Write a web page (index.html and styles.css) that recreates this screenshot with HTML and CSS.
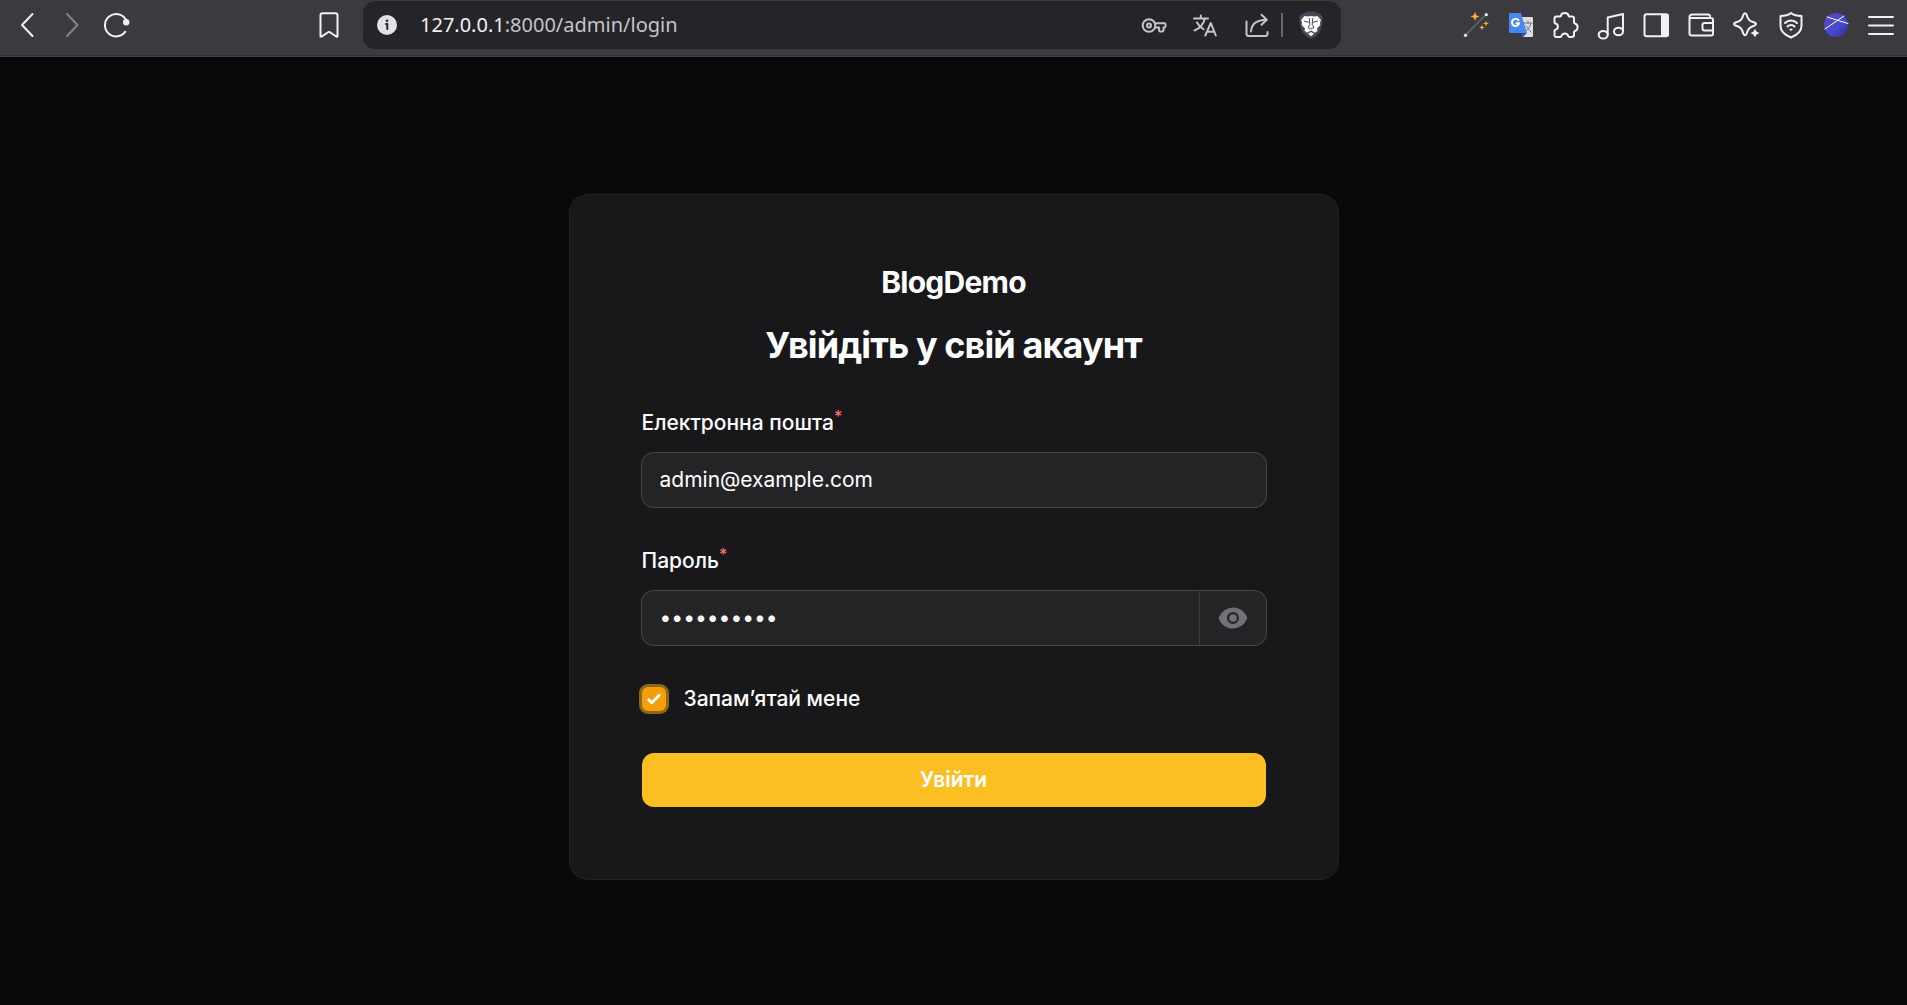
FILE: index.html
```html
<!DOCTYPE html>
<html lang="uk">
<head>
<meta charset="utf-8">
<meta name="viewport" content="width=device-width, initial-scale=1">
<title>Увійдіть у свій акаунт - BlogDemo</title>
<link rel="stylesheet" href="styles.css">
</head>
<body>
<header class="toolbar">
  <div class="toolbar-start">
    <div class="icon-group">
      <button class="icon-button" type="button" aria-label="Назад"><svg class="icon" viewBox="0 0 32 32"><path d="M21.500 5 11 16l10.500 11"/></svg></button>
      <button class="icon-button muted" type="button" aria-label="Вперед"><svg class="icon" viewBox="0 0 32 32"><path d="M11 5l10.500 11L11 27"/></svg></button>
      <button class="icon-button" type="button" aria-label="Оновити"><svg class="icon" viewBox="0 0 32 32"><path d="M24.800 10.500A11.200 11.200 0 1 0 24.300 22.700"/><circle class="solid" cx="25.200" cy="13.300" r="3.200"/></svg></button>
    </div>
    <button class="icon-button" type="button" aria-label="Закладка"><svg class="icon" viewBox="0 0 32 32"><path d="M9.500 4.300h13a2 2 0 0 1 2 2V27.500l-1 .2L16.500 23h-1l-7 4.700-1-.2V6.300a2 2 0 0 1 2-2z"/></svg></button>
  </div>
  <div class="address-bar">
    <button class="site-info" type="button" aria-label="Відомості про сайт"><svg class="icon" viewBox="0 0 32 32"><circle class="solid" cx="16" cy="16" r="10"/><path class="info-mark" d="M15 15h1.300v5"/><circle class="info-dot" cx="16" cy="11.800" r="1.300"/></svg></button>
    <p class="url"><span class="url-host">127.0.0.1</span>:8000/admin/login</p>
    <div class="address-actions">
      <button class="address-button" type="button" aria-label="Паролі"><svg class="icon" viewBox="0 0 32 32"><circle cx="11" cy="16.500" r="6.300"/><circle cx="11" cy="16.500" r="2"/><path d="M17 14.300h9.500q1 0 1 1v2q0 1.200-1.200 1.200h-.8v2.700q0 1.200-1.200 1.200h-2q-1.200 0-1.200-1.200v-2.700H17"/></svg></button>
      <button class="address-button" type="button" aria-label="Перекласти"><svg class="icon" viewBox="0 0 32 32"><path d="M5 9.500h14M11.800 6.500v3M16 9.500C14.500 15 10.500 19.500 5.500 21.500M8 13.500c1.500 3 3.500 5 6.500 6.700M16.300 26.500 21.800 14l5 12.500M18 22.700h7.300"/></svg></button>
      <button class="address-button" type="button" aria-label="Поділитися"><svg class="icon" viewBox="0 0 32 32"><path d="M6.500 12.500V25q0 2 2 2h17q2 0 2-2v-2M11 22.500C11.500 15 16 11 26.500 10.800M21.500 5.800l5.300 5-5.300 5"/></svg></button>
      <button class="shield-button" type="button" aria-label="Захист"><svg class="icon" viewBox="0 0 32 32"><path class="lion-mane" d="m9 4.500 3-2h8l3 2h2l3 4-1 2 .5 3L25 23l-4 4-5 3-5-3-4-4L4.500 13.500l.5-3-1-2 3-4z"/><path class="lion-face" d="m9.500 7 3.500.6L16 7l3 .6 3.500-.6L26 11l-1 2.500.3 2.500-3.300 3.500.5 2.300-2.500 2L16 21.500l-4 2.300-2.500-2 .5-2.300L6.700 16l.3-2.500L6 11zM16 23l3 1.800-3 2.400-3-2.400z"/><path class="lion-lines" d="m9.500 12.200 4 1M22.500 12.200l-4 1M14.300 9.500l.5 6-1.800 3 3 1.500 3-1.500-1.800-3 .5-6"/></svg></button>
    </div>
  </div>
  <div class="toolbar-end">
    <button class="icon-button" type="button" aria-label="Чарівна паличка"><svg class="icon" viewBox="0 0 32 32"><path class="wand" d="M5.500 26 26 5.500"/><circle class="solid" cx="5.500" cy="26.300" r="1.600"/><circle class="solid" cx="26.300" cy="5.700" r="1.600"/><path class="stars" d="m15 3 1.300 3.200 3.200 1.300-3.200 1.300L15 12l-1.300-3.200-3.200-1.300 3.200-1.300zM26 11.500l.8 2.200 2.200.8-2.200.8-.8 2.200-.8-2.200-2.200-.8 2.200-.8zM22 15.800l.8 2 2 .7-2 .8-.8 2-.8-2-2-.8 2-.7z"/></svg></button>
    <button class="icon-button" type="button" aria-label="Перекладач"><svg class="icon" viewBox="0 0 32 32"><path class="paper" d="M15 8h12q1 0 1 1v18q0 1-1 1h-9z"/><path class="paper-ink" d="M19 14h8M23 12v2M26 14c-1 4-3 6-5 8M21 17l5 6"/><path class="blue-fold" d="M17 24h5l-4 4z"/><path class="blue-page" d="M5 4h11l6 20H5q-1 0-1-1V5q0-1 1-1z"/><path class="blue-mark" d="M13.500 11.300a3.600 3.600 0 1 0 .6 3H11.500"/></svg></button>
    <button class="icon-button" type="button" aria-label="Розширення"><svg class="icon" viewBox="0 0 32 32"><path d="M6.500 7.500H10q1 0 1-1a3.800 3 0 0 1 7.500 0q0 1 1 1H22a2 2 0 0 1 2 2v3.800q0 1 1 1.200a4 4 0 0 1 0 7.500q-1 .3-1 1.300V26a2 2 0 0 1-2 2h-2.500q-1 0-1.300-1a3.500 3.500 0 0 0-6.700 0q-.3 1-1.300 1h-4A1.700 1.700 0 0 1 4.500 26v-4q0-1 1-1.300a3.200 3.200 0 0 0 0-6.200q-1-.3-1-1.300V9.500a2 2 0 0 1 2-2z"/></svg></button>
    <button class="icon-button" type="button" aria-label="Медіа"><svg class="icon" viewBox="0 0 32 32"><ellipse cx="8.200" cy="25.700" rx="4.500" ry="3.800"/><ellipse cx="23.500" cy="22.500" rx="4.500" ry="3.800"/><path d="M12.700 25.500V8.500l15.300-3.500v17.500"/></svg></button>
    <button class="icon-button" type="button" aria-label="Бічна панель"><svg class="icon" viewBox="0 0 32 32"><rect x="4.500" y="5.300" width="23.500" height="22" rx="2"/><path class="solid" d="M21 5h6q2 0 2 2v18.500q0 2-2 2h-6z"/></svg></button>
    <button class="icon-button" type="button" aria-label="Гаманець"><svg class="icon" viewBox="0 0 32 32"><path d="M25 9V7.500q0-2-2-2H7A2.500 2.500 0 0 0 4.500 8v16.500q0 2 2 2H26q2 0 2-2V11q0-2-2-2H7q-2.500 0-2.500-1.500M28 14h-8.500q-2 0-2 2v3.500q0 2 2 2H28"/></svg></button>
    <button class="icon-button" type="button" aria-label="Помічник"><svg class="icon" viewBox="0 0 32 32"><path d="M13.500 5.500q1.500-2.500 3 0c1.500 5.500 3 6.500 8 8q3 1.500 0 3C20 18 18 19.500 16.500 25q-1.500 2.500-3 0C12 19.500 10.500 18 5.500 16.500q-3-1.500 0-3c5-1.500 6.500-2.500 8-8z"/><path class="solid" d="M25 19.500q1 3.500 4.500 4.500-3.500 1-4.500 4.500-1-3.500-4.500-4.500 3.500-1 4.500-4.500z"/></svg></button>
    <button class="icon-button" type="button" aria-label="VPN"><svg class="icon" viewBox="0 0 32 32"><path d="M16 4c2.500 2 6 3 10.500 3v10c0 5-4.500 9-10.500 11.500C10 26 5.500 22 5.500 17V7C10 7 13.500 6 16 4zM10 14c3.500-3.500 8.500-3.500 12 0M12.500 17.500c2-2 5-2 7 0"/><path class="solid" d="M14 20.300q2-1.500 4 0l-2 1.700z"/></svg></button>
    <button class="icon-button" type="button" aria-label="Профіль"><svg class="icon" viewBox="0 0 32 32"><defs><linearGradient id="orb" x1="0" y1="0" x2="1" y2="1"><stop offset="0" stop-color="#6247c4"/><stop offset=".6" stop-color="#4449cf"/><stop offset="1" stop-color="#322a86"/></linearGradient></defs><circle class="orb" cx="16" cy="16" r="12"/><path class="orb-lines" d="M5 20 24 7M7 8l21 6.500"/></svg></button>
    <button class="icon-button" type="button" aria-label="Меню"><svg class="icon" viewBox="0 0 32 32"><path d="M4 8h24M4 16.500h24M4 25h24"/></svg></button>
  </div>
</header>
<main class="page">
  <section class="card">
    <div class="brand">BlogDemo</div>
    <h1 class="heading">Увійдіть у свій акаунт</h1>
    <form class="form">
      <div class="field">
        <label class="label" for="email">Електронна пошта<sup class="required">*</sup></label>
        <div class="control"><input class="input" id="email" type="email" value="admin@example.com" required></div>
      </div>
      <div class="field">
        <label class="label" for="password">Пароль<sup class="required">*</sup></label>
        <div class="control">
          <input class="input" id="password" type="password" value="passwordpw" required>
          <button class="reveal" type="button" aria-label="Показати пароль"><svg class="eye" viewBox="0 0 20 20"><path d="M10 12.500a2.500 2.500 0 1 0 0-5 2.500 2.500 0 0 0 0 5Z"/><path fill-rule="evenodd" d="M.664 10.590a1.651 1.651 0 0 1 0-1.186A10.004 10.004 0 0 1 10 3c4.257 0 7.893 2.660 9.336 6.410.147.381.146.804 0 1.186A10.004 10.004 0 0 1 10 17c-4.257 0-7.893-2.660-9.336-6.410ZM14 10a4 4 0 1 1-8 0 4 4 0 0 1 8 0Z"/></svg></button>
        </div>
      </div>
      <label class="remember" for="remember"><input class="checkbox" id="remember" type="checkbox" checked>Запам’ятай мене</label>
      <button class="submit" type="submit">Увійти</button>
    </form>
  </section>
</main>
</body>
</html>
```
FILE: styles.css
```css
*, *::before, *::after {
  box-sizing: border-box;
}

body {
  display: flex;
  flex-direction: column;
  min-height: 100vh;
  margin: 0;
  background: #09090b;
  color: #fff;
  font-family: Inter, "Noto Sans", sans-serif;
  font-size: 21px;
  line-height: 36px;
}

button, input {
  margin: 0;
  padding: 0;
  border: 0;
  background: none;
  color: inherit;
  font: inherit;
}

button {
  cursor: pointer;
}

/* Browser toolbar */
.toolbar {
  display: flex;
  align-items: flex-start;
  height: 57px;
  padding-top: 1px;
  border-bottom: 1px solid #434247;
  background: #3b3a3f;
  box-shadow: inset 0 -1px #323136;
  color: #f1f0f5;
}

.toolbar-start,
.toolbar-end,
.icon-group,
.address-bar,
.address-actions {
  display: flex;
  align-items: center;
  height: 48px;
}

.toolbar-start {
  flex: 0 0 363px;
  justify-content: space-between;
  padding: 0 12px 0 4px;
}

.toolbar-end {
  flex: 0 0 566px;
  justify-content: flex-end;
  padding-right: 4px;
}

.icon-button,
.address-button,
.site-info,
.shield-button {
  display: flex;
  align-items: center;
  justify-content: center;
  height: 48px;
}

.icon-button {
  width: 45px;
}

.muted {
  color: #858489;
}

.icon {
  width: 32px;
  height: 32px;
  fill: none;
  stroke: currentColor;
  stroke-width: 2;
  stroke-linecap: round;
  stroke-linejoin: round;
}

.solid {
  fill: currentColor;
  stroke: none;
}

.address-bar {
  flex: 1;
  min-width: 0;
  padding-left: 8px;
  border-radius: 12px;
  background: #252529;
  color: #c5c4ca;
}

.site-info {
  width: 32px;
  color: #e3e2e8;
}

.info-mark {
  stroke: #252529;
}

.info-dot {
  fill: #252529;
  stroke: none;
}

.url {
  flex: 1;
  min-width: 0;
  margin: 0;
  padding-left: 17px;
  overflow: hidden;
  font-family: "Noto Sans", sans-serif;
  font-size: 20px;
  white-space: nowrap;
}

.url-host {
  color: #f1f0f5;
}

.address-button {
  width: 51px;
}

.shield-button {
  position: relative;
  width: 60px;
}

.shield-button::before {
  content: "";
  position: absolute;
  top: 12px;
  left: 0;
  width: 2px;
  height: 24px;
  background: #68676d;
}

.lion-mane {
  fill: #47475a;
  stroke: none;
}

.lion-face {
  fill: #fff;
  stroke: none;
}

.lion-lines {
  stroke: #47475a;
  stroke-width: 1;
}

.wand {
  stroke: #50636d;
}

.stars {
  fill: #ffac33;
  stroke: none;
}

.paper {
  fill: #dedede;
  stroke: none;
}

.paper-ink {
  stroke: #607988;
  stroke-width: 1;
}

.blue-page {
  fill: #4688f4;
  stroke: none;
}

.blue-fold {
  fill: #3549c8;
  stroke: none;
}

.blue-mark {
  stroke: #fff;
}

.orb {
  fill: url(#orb);
  stroke: none;
}

.orb-lines {
  stroke: #fff;
  stroke-width: 1;
}

/* Login page */
.page {
  display: flex;
  flex: 1;
  align-items: center;
  justify-content: center;
  padding: 24px 16px 12px;
}

.card {
  width: 100%;
  max-width: 768px;
  padding: 72px;
  border-radius: 18px;
  background: #18181b;
  box-shadow: 0 0 0 1px #222225;
}

.brand {
  font-size: 30px;
  font-weight: 700;
  line-height: 30px;
  letter-spacing: -0.025em;
  text-align: center;
}

.heading {
  margin: 24px 0 36px;
  font-size: 36px;
  font-weight: 700;
  line-height: 48px;
  letter-spacing: -0.025em;
  text-align: center;
}

.form {
  display: grid;
  gap: 36px;
}

.field {
  display: grid;
  gap: 12px;
}

.label,
.remember {
  font-weight: 500;
}

.required {
  color: #f87171;
  font-size: 16px;
  line-height: 0;
}

.control {
  display: flex;
  height: 54px;
  border-radius: 12px;
  background: #242427;
  box-shadow: 0 0 0 1px #464649;
}

.input {
  flex: 1;
  min-width: 0;
  padding: 0 18px;
  outline: 0;
}

.reveal {
  display: flex;
  align-items: center;
  padding: 0 18px;
  border-left: 1px solid #3a3a3d;
}

.eye {
  width: 30px;
  height: 30px;
  fill: #71717a;
}

.remember {
  display: flex;
  align-items: center;
  gap: 18px;
}

.checkbox {
  width: 24px;
  height: 24px;
  border-radius: 6px;
  background: #f59e0b url("data:image/svg+xml,%3Csvg xmlns='http://www.w3.org/2000/svg' viewBox='0 0 16 16' fill='white'%3E%3Cpath d='M12.207 4.793a1 1 0 0 1 0 1.414l-5 5a1 1 0 0 1-1.414 0l-2-2a1 1 0 0 1 1.414-1.414L6.500 9.086l4.293-4.293a1 1 0 0 1 1.414 0z'/%3E%3C/svg%3E") center / 24px 24px no-repeat;
  box-shadow: 0 0 0 3px #8a691f;
  appearance: none;
}

.submit {
  height: 54px;
  border-radius: 12px;
  background: #fbbf24;
  font-weight: 600;
}
```
